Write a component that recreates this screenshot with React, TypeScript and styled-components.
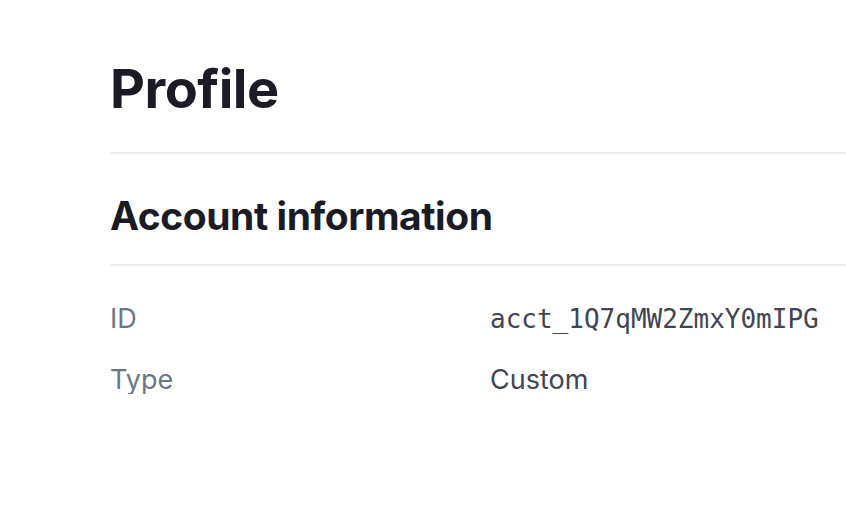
import styled, { createGlobalStyle } from "styled-components"

const GlobalStyle = createGlobalStyle`
  body {
    margin: 0;
    background: #ffffff;
    font-family: Inter, "Liberation Sans", sans-serif;
  }
`

const Page = styled.div`
  padding: 56px 0 0 110px;
`

const Title = styled.h1`
  margin: 0;
  font-size: 54px;
  line-height: 66px;
  font-weight: 700;
  color: #1a1b25;
  letter-spacing: -0.5px;
  padding-bottom: 30px;
  border-bottom: 2px solid #ebeef1;
`

const SectionTitle = styled.h2`
  margin: 0;
  padding: 38px 0 24px;
  font-size: 39px;
  line-height: 48px;
  font-weight: 700;
  color: #1a1b25;
  letter-spacing: -0.45px;
  border-bottom: 2px solid #ebeef1;
`

const List = styled.dl`
  margin: 0;
  padding-top: 39px;
  display: grid;
  grid-template-columns: 380px 1fr;
  row-gap: 33px;
  font-size: 27px;
  line-height: 28px;
`

const Label = styled.dt`
  color: #6c7688;
`

const Value = styled.dd<{ $mono?: boolean }>`
  margin: 0;
  color: #414552;
  font-family: ${(p) => (p.$mono ? '"DejaVu Sans Mono", "Liberation Mono", monospace' : "inherit")};
  font-size: ${(p) => (p.$mono ? "26px" : "inherit")};
`

export default function App() {
  return (
    <>
      <GlobalStyle />
      <Page>
        <Title>Profile</Title>
        <SectionTitle>Account information</SectionTitle>
        <List>
          <Label>ID</Label>
          <Value $mono>acct_1Q7qMW2ZmxY0mIPG</Value>
          <Label>Type</Label>
          <Value>Custom</Value>
        </List>
      </Page>
    </>
  )
}
